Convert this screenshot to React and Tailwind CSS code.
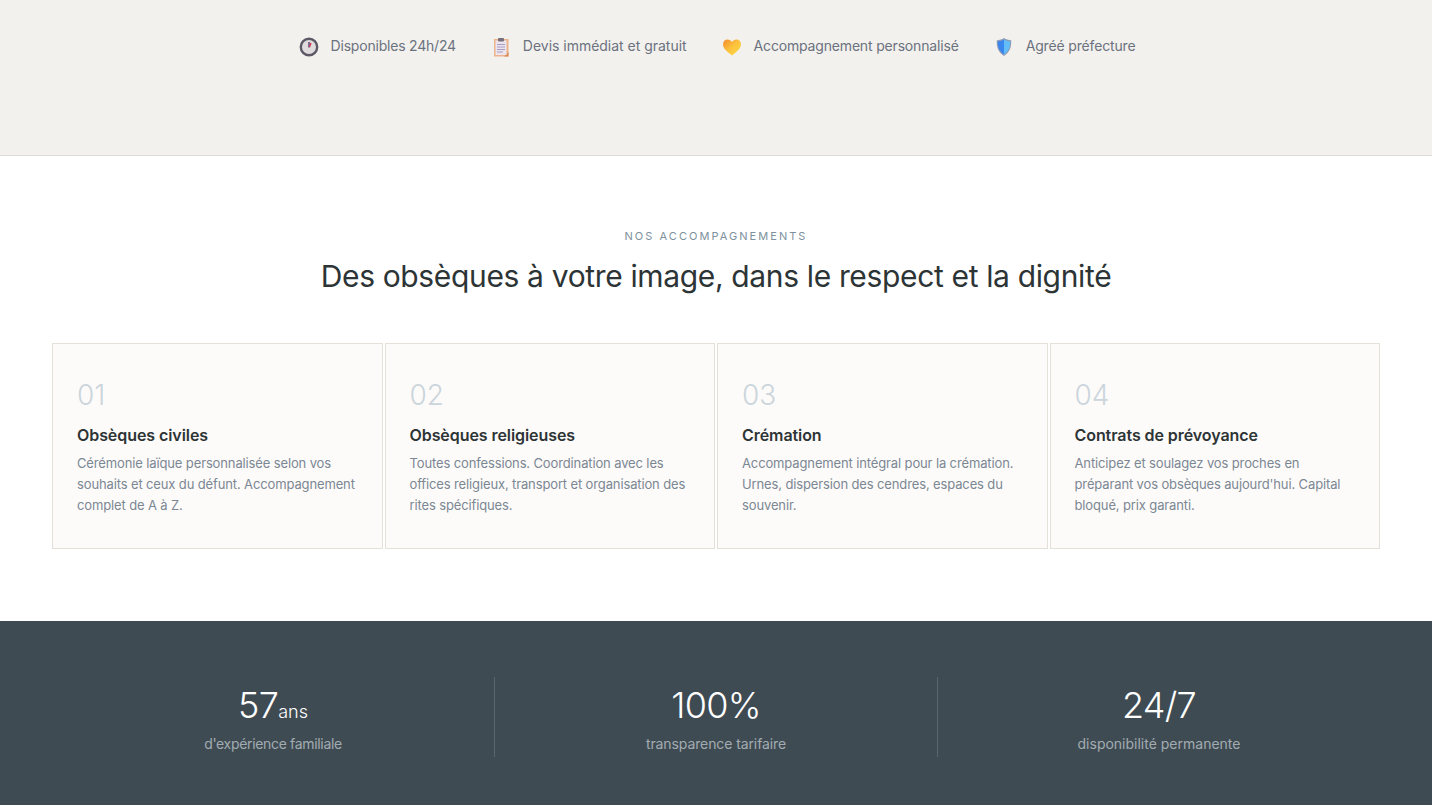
const font = { fontFamily: 'Inter, "Noto Sans", sans-serif' };

function ClockIcon() {
  return (
    <svg width="20" height="20" viewBox="0 0 20 20">
      <circle cx="10" cy="10" r="8.2" fill="#dfdadb" stroke="#5c5866" strokeWidth="2.4" />
      <path d="M10 10.500V5" stroke="#5b4a70" strokeWidth="1.500" />
      <path d="M10.500 10l1.500-4" stroke="#d5304f" strokeWidth="1.300" />
    </svg>
  );
}

function ClipboardIcon() {
  return (
    <svg width="20" height="20" viewBox="0 0 20 20">
      <rect x="3" y="2" width="14.500" height="17.500" fill="#edb48c" />
      <path d="M17.500 15v4.500H13z" fill="#d98a55" />
      <rect x="4.500" y="3.500" width="11" height="14.500" fill="#ebe5ee" />
      <rect x="7" y="1" width="6" height="3.500" rx="1" fill="#77707c" />
      <path d="M6 7.500h8M6 10h8M6 12.500h8M6 15h6" stroke="#a99cc4" strokeWidth="1.100" />
    </svg>
  );
}

function HeartIcon() {
  return (
    <svg width="20" height="20" viewBox="0 0 20 20">
      <defs>
        <linearGradient id="heart" x1="0" y1="0" x2="0.8" y2="0.8">
          <stop offset="0" stopColor="#f58a30" />
          <stop offset="0.6" stopColor="#fbc23c" />
          <stop offset="1" stopColor="#fdd244" />
        </linearGradient>
      </defs>
      <path d="M10 18.500C5 14.500 1 11.500 1 7.200 1 4.200 3.200 2.500 5.500 2.500c2 0 3.500 1 4.500 2.600 1-1.600 2.500-2.600 4.500-2.600 2.300 0 4.500 1.700 4.500 4.700 0 4.300-4 7.300-9 11.300z" fill="url(#heart)" />
    </svg>
  );
}

function ShieldIcon() {
  return (
    <svg width="20" height="20" viewBox="0 0 20 20">
      <path d="M10 1c2 1.300 4.500 2.100 7.200 2.300.4 7-1.600 12.300-7.200 15.700C4.400 15.600 2.400 10.300 2.800 3.300 5.500 3.100 8 2.300 10 1z" fill="#8f9bb5" />
      <path d="M10 2.400v15C5.200 14.400 3.500 9.700 3.800 4.300 6.100 4.100 8.200 3.500 10 2.400z" fill="#3b86ee" />
      <path d="M10 2.400c1.800 1.100 3.900 1.700 6.200 1.900.3 5.400-1.400 10.100-6.200 13.100z" fill="#63bdf8" />
    </svg>
  );
}

const badges = [
  { icon: <ClockIcon />, label: 'Disponibles 24h/24', track: 'tracking-[-0.21px]' },
  { icon: <ClipboardIcon />, label: 'Devis immédiat et gratuit', track: 'tracking-[-0.02px]' },
  { icon: <HeartIcon />, label: 'Accompagnement personnalisé', track: 'tracking-[-0.17px]' },
  { icon: <ShieldIcon />, label: 'Agréé préfecture', track: 'tracking-[-0.16px]' },
];

const services = [
  { num: '01', title: 'Obsèques civiles', text: 'Cérémonie laïque personnalisée selon vos souhaits et ceux du défunt. Accompagnement complet de A à Z.' },
  { num: '02', title: 'Obsèques religieuses', text: 'Toutes confessions. Coordination avec les offices religieux, transport et organisation des rites spécifiques.' },
  { num: '03', title: 'Crémation', text: 'Accompagnement intégral pour la crémation. Urnes, dispersion des cendres, espaces du souvenir.' },
  { num: '04', title: 'Contrats de prévoyance', text: "Anticipez et soulagez vos proches en préparant vos obsèques aujourd'hui. Capital bloqué, prix garanti." },
];

const stats = [
  { value: '57', unit: 'ans', label: "d'expérience familiale", track: 'tracking-[-0.33px]' },
  { value: '100%', label: 'transparence tarifaire', track: 'tracking-[-0.1px]' },
  { value: '24/7', label: 'disponibilité permanente', track: 'tracking-normal' },
];

export default function App() {
  return (
    <div style={font} className="h-[805px] overflow-hidden bg-white">
      {/* Reassurance */}
      <section className="h-[156px] bg-[#f3f1ed] border-b border-[#e0dcd3] pt-[37px]">
        <div className="flex justify-center gap-[35px] pl-[2px]">
          {badges.map(b => (
            <div key={b.label} className={`flex items-center gap-[12px] h-[20px] text-[14px] leading-[18px] text-[#6b7280] ${b.track}`}>
              {b.icon}
              <span className="-mt-[2px]">{b.label}</span>
            </div>
          ))}
        </div>
      </section>

      {/* Services */}
      <section className="h-[465px] px-[52px] pt-[72px]">
        <p className="text-center text-[11px] leading-[16px] tracking-[2.05px] text-[#7d919d] uppercase">Nos accompagnements</p>
        <h2 className="mt-[12px] text-center text-[30px] leading-[40px] text-[#2d3436] tracking-[-0.35px]">Des obsèques à votre image, dans le respect et la dignité</h2>
        <div className="mt-[47px] grid grid-cols-4 gap-[2px]">
          {services.map(s => (
            <div key={s.num} className="h-[206px] bg-[#fdfbf9] border border-[#e5e1d8] px-[24px] pt-[33px]">
              <div className="text-[28px] leading-[36px] font-light text-[#cbd5dc]">{s.num}</div>
              <h3 className="mt-[10px] text-[16px] leading-[24px] font-semibold text-[#2d3436] tracking-[-0.07px]">{s.title}</h3>
              <p className="mt-[6px] text-[13px] leading-[20.8px] text-[#7b8794] tracking-[-0.13px]">{s.text}</p>
            </div>
          ))}
        </div>
      </section>

      {/* Stats */}
      <section className="h-[184px] bg-[#3f4b53] pt-[56px] px-[52px]">
        <div className="grid grid-cols-[443px_443px_442px]">
          {stats.map((s, i) => (
            <div key={s.label} className={`h-[80px] text-center ${i < 2 ? 'border-r border-white/15' : ''}`}>
              <div className="flex h-[56px] items-baseline justify-center text-[36px] leading-[56px] font-light text-white tracking-[-0.7px]">
                {s.value}
                {s.unit && <span className="text-[18px] tracking-normal">{s.unit}</span>}
              </div>
              <div className={`mt-[1px] text-[14px] leading-[20px] text-[#a2abb1] ${s.track}`}>{s.label}</div>
            </div>
          ))}
        </div>
      </section>
    </div>
  );
}
